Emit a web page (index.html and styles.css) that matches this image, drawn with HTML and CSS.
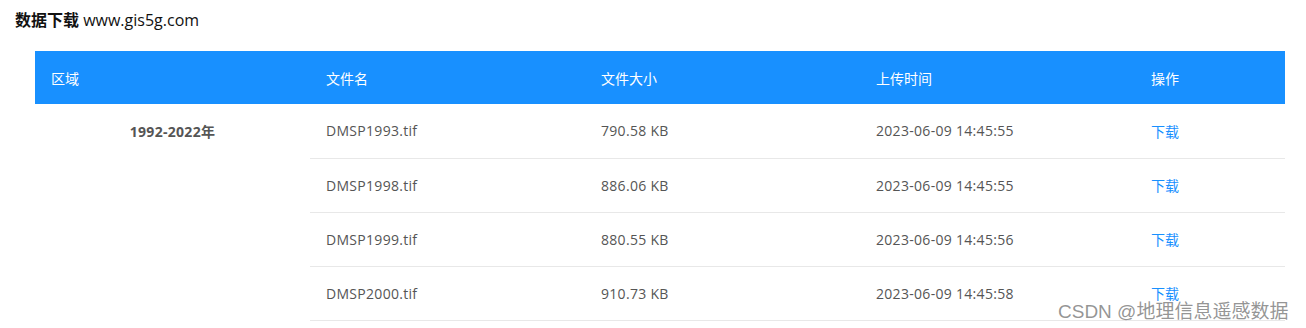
FILE: index.html
```html
<!DOCTYPE html>
<html>
<head>
<meta charset="utf-8">
<link rel="stylesheet" href="styles.css">
</head>
<body>
<div class="page">
  <h3 class="title"><b>数据下载</b> www.gis5g.com</h3>
  <table class="data">
    <thead>
      <tr><th>区域</th><th>文件名</th><th>文件大小</th><th>上传时间</th><th class="op">操作</th></tr>
    </thead>
    <tbody>
      <tr><td class="region" rowspan="4">1992-2022年</td><td>DMSP1993.tif</td><td>790.58 KB</td><td>2023-06-09 14:45:55</td><td class="op"><a>下载</a></td></tr>
      <tr><td>DMSP1998.tif</td><td>886.06 KB</td><td>2023-06-09 14:45:55</td><td class="op"><a>下载</a></td></tr>
      <tr><td>DMSP1999.tif</td><td>880.55 KB</td><td>2023-06-09 14:45:56</td><td class="op"><a>下载</a></td></tr>
      <tr><td>DMSP2000.tif</td><td>910.73 KB</td><td>2023-06-09 14:45:58</td><td class="op"><a>下载</a></td></tr>
    </tbody>
  </table>
</div>
<div class="watermark">CSDN @地理信息遥感数据</div>
</body>
</html>
```
FILE: styles.css
```css
html, body { margin: 0; padding: 0; background: #fff; }
body { font-family: "Open Sans", "Noto Sans CJK SC", sans-serif; }
.page { padding: 9px 0 0 15px; }
.title {
  margin: 0;
  font-size: 16px;
  font-weight: normal;
  color: #111;
  line-height: 22px;
  font-family: "Open Sans", "Noto Sans CJK SC", sans-serif;
}
.title b { font-weight: bold; }
.data {
  margin: 20px 0 0 20px;
  width: 1250px;
  border-collapse: collapse;
  table-layout: fixed;
  font-size: 14px;
  letter-spacing: 0.3px;
  color: #555;
}
.data th {
  background: #1890ff;
  color: #fff;
  font-weight: normal;
  text-align: left;
  letter-spacing: 0;
  height: 53px;
  padding: 0 0 0 16px;
  width: 275px;
  box-sizing: border-box;
}
.data th.op { width: 150px; }
.data td {
  height: 54px;
  padding: 0 0 0 16px;
  border-bottom: 1px solid #e8e8e8;
  box-sizing: border-box;
}
.data td.region {
  border-bottom: none;
  vertical-align: top;
  text-align: center;
  padding: 17px 0 0 0;
  font-weight: bold;
}
.data a { color: #1890ff; letter-spacing: 0; }
.watermark {
  position: absolute;
  left: 1058px;
  top: 296px;
  font-size: 19px;
  color: rgba(130,130,130,0.85);
  font-family: "Liberation Sans", "Noto Sans CJK SC", sans-serif;
}
```
